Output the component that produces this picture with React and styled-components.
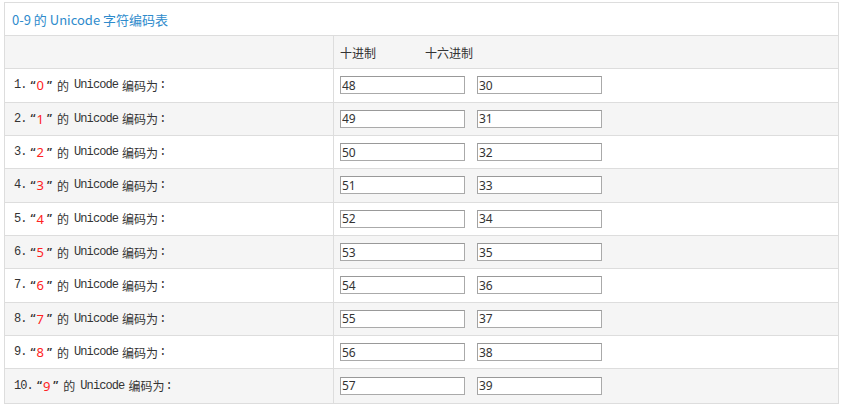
import React from 'react';
import styled, { createGlobalStyle } from 'styled-components';

const GlobalStyle = createGlobalStyle`
  body {
    margin: 0;
    background: #fff;
    font-family: "Noto Sans CJK SC", "Noto Sans", sans-serif;
    color: #333;
  }
`;

const Page = styled.div`
  padding: 2px 0 0 4px;
`;

const Table = styled.div`
  width: 833px;
  border: 1px solid #ddd;
`;

const Caption = styled.div`
  height: 32px;
  display: flex;
  align-items: center;
  padding-left: 7px;
  border-bottom: 1px solid #ddd;
  color: #2e8bcc;
  font-size: 13px;
`;

const Row = styled.div`
  display: grid;
  grid-template-columns: 328px 1fr;
  height: 33.333px;
  box-sizing: border-box;
  background: ${(p) => (p.$shaded ? '#f5f5f5' : '#fff')};
  border-bottom: ${(p) => (p.$last ? 'none' : '1px solid #ddd')};
`;

const LabelCell = styled.div`
  display: flex;
  align-items: center;
  padding-left: 9px;
  font-size: 12px;
  color: #333;
  white-space: pre;
`;

const Latin = styled.span`
  font-family: "Liberation Mono", monospace;
  font-size: 12px;
  letter-spacing: -0.9px;
  margin-left: ${(p) => p.$ml || 0}px;
`;

const Cjk = styled.span`
  font-family: "Noto Sans CJK SC", sans-serif;
  font-size: 12px;
  margin-left: ${(p) => p.$ml || 0}px;
`;

const Quote = styled.span`
  font-family: "Noto Sans", sans-serif;
  font-size: 12px;
  font-weight: 600;
  margin-left: ${(p) => p.$ml || 0}px;
`;

const Digit = styled.span`
  font-family: "Noto Sans", sans-serif;
  font-size: 13px;
  color: #f22;
  margin-left: 1px;
`;

const ValueCell = styled.div`
  display: flex;
  align-items: center;
  gap: 12px;
  padding-left: 6px;
  border-left: 1px solid #ddd;
`;

const HeadText = styled.span`
  font-size: 12px;
  color: #333;
  width: ${(p) => p.$w}px;
`;

const Field = styled.input`
  width: 125px;
  height: 18px;
  box-sizing: border-box;
  margin: 0;
  padding: 0 1px;
  border: 1px solid #aaa;
  border-top-color: #999;
  border-left-color: #a3a3a3;
  background: #fff;
  font-family: "Noto Sans", "Open Sans", sans-serif;
  font-size: 12px;
  color: #333;
  outline: none;
`;

const codes = Array.from({ length: 10 }, (_, i) => ({
  digit: String(i),
  dec: String(48 + i),
  hex: (48 + i).toString(16),
}));

const App = () => (
  <Page>
    <GlobalStyle />
    <Table>
      <Caption>0-9 的 Unicode 字符编码表</Caption>
      <Row $shaded>
        <LabelCell />
        <ValueCell>
          <HeadText $w={73}>十进制</HeadText>
          <HeadText $w={60}>十六进制</HeadText>
        </ValueCell>
      </Row>
      {codes.map((c, i) => (
        <Row key={c.digit} $shaded={i % 2 === 1} $last={i === codes.length - 1}>
          <LabelCell>
            <Latin>{`${i + 1}.`}</Latin>
            <Quote $ml={4}>“</Quote>
            <Digit>{c.digit}</Digit>
            <Quote $ml={3}>”</Quote>
            <Cjk $ml={5}>的</Cjk>
            <Latin $ml={5}>Unicode</Latin>
            <Cjk $ml={4}>编码为</Cjk>
            <Latin $ml={1}>:</Latin>
          </LabelCell>
          <ValueCell>
            <Field readOnly value={c.dec} />
            <Field readOnly value={c.hex} />
          </ValueCell>
        </Row>
      ))}
    </Table>
  </Page>
);

export default App;
